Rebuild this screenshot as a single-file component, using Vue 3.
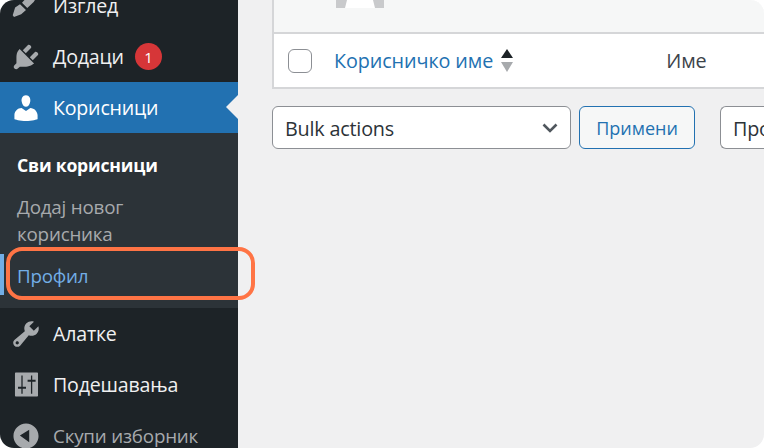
<script setup>
const before = [
  { label: 'Изглед', d: 'M6.25 8.900 10 12.500 7 15.200 2.500 16.800 1.700 15.800 3.200 10.900zM7.500 7.900 10.800 11.250 14.800 7.500 17 4 11.900 3.200z' },
  { label: 'Додаци', badge: '1', d: 'M13.11 4.36L9.87 7.6 8 5.73l3.24-3.24c.35-.34 1.05-.2 1.56.32.52.51.66 1.21.31 1.55zm-8 1.77l.91-1.12 9.01 9.01-1.19.84c-.71.71-2.63 1.16-3.82 1.16H6.14L4.9 17.26c-.59.59-1.54.59-2.12 0-.59-.58-.59-1.53 0-2.12l1.24-1.24v-3.88c0-1.13.4-3.19 1.09-3.89zm7.26 3.97l3.24-3.24c.34-.35 1.04-.21 1.55.31.52.51.66 1.21.31 1.55l-3.24 3.25z' },
]
const userIcon = 'M10 9.25c-2.27 0-2.73-3.44-2.73-3.44C7 4.02 7.82 2 9.97 2c2.16 0 2.98 2.02 2.71 3.81 0 0-.41 3.44-2.68 3.44zm0 2.57L12.72 10c2.39 0 4.52 2.33 4.52 4.53v2.49s-3.65 1.13-7.24 1.13c-3.65 0-7.24-1.13-7.24-1.13v-2.49c0-2.25 1.94-4.48 4.47-4.48z'
const after = [
  { label: 'Алатке', d: 'M16.68 9.77c-1.34 1.34-3.3 1.67-4.95.99l-5.41 6.52c-.99.99-2.59.99-3.58 0s-.99-2.59 0-3.57l6.52-5.42c-.68-1.65-.35-3.61.99-4.95 1.28-1.28 3.12-1.62 4.72-1.06l-2.89 2.89 2.82 2.82 2.86-2.87c.53 1.58.18 3.39-1.08 4.65zM3.81 16.21c.4.39 1.04.39 1.43 0 .4-.4.4-1.04 0-1.43-.39-.4-1.03-.4-1.43 0-.39.39-.39 1.03 0 1.43z' },
  { label: 'Подешавања', d: 'M3.6 2.200h13.400c.3 0 .5.2.5.5v14c0 .3-.2.5-.5.5H3.600c-.3 0-.5-.2-.5-.5v-14c0-.3.2-.5.5-.5zM7.100 4h.8v7.100h2.100v1.200H7.900v3.200h-.8v-3.200H5v-1.200h2.100zM13.100 4h.8v2.700H16v1.200h-2.100v7.600h-.8V7.900H11V6.700h2.100z' },
  { label: 'Скупи изборник', muted: true, d: 'M10 2.16c4.33 0 7.84 3.51 7.84 7.84s-3.51 7.84-7.84 7.84S2.16 14.33 2.16 10 5.71 2.16 10 2.16zm2 11.72V6.12L6.18 9.69z' },
]
</script>

<template>
  <div class="page">
    <aside class="sidebar">
      <div v-for="item in before" :key="item.label" class="item">
        <svg class="icon" viewBox="0 0 20 20"><path :d="item.d" /></svg>
        <span>{{ item.label }}</span>
        <span v-if="item.badge" class="badge">{{ item.badge }}</span>
      </div>
      <div class="item active">
        <svg class="icon" viewBox="0 0 20 20"><path :d="userIcon" /></svg>
        <span>Корисници</span>
        <i class="notch"></i>
      </div>
      <ul class="submenu">
        <li class="sub current">Сви корисници</li>
        <li class="sub two">Додај новог корисника</li>
        <li class="sub profile">
          Профил
          <i class="focus-bar"></i>
          <i class="highlight"></i>
        </li>
      </ul>
      <div v-for="item in after" :key="item.label" class="item" :class="{ muted: item.muted }">
        <svg class="icon" viewBox="0 0 20 20"><path fill-rule="evenodd" :d="item.d" /></svg>
        <span>{{ item.label }}</span>
      </div>
    </aside>

    <main class="main">
      <div class="table">
        <div class="table-top">
          <svg class="avatar" viewBox="0 0 48 8">
            <path d="M0 0h48v8H0z" fill="#c9cacc" />
            <path d="M11 0h26l2 8H9z" fill="#fff" />
          </svg>
        </div>
        <div class="table-head">
          <span class="check"></span>
          <span class="col-user">Корисничко име</span>
          <span class="sort"><i class="up"></i><i class="down"></i></span>
          <span class="col-name">Име</span>
        </div>
      </div>
      <div class="actions">
        <div class="select bulk">
          <span class="select-text">Bulk actions</span>
          <svg class="chev" viewBox="0 0 16 10"><path d="M1.500 1.500 8 8l6.500-6.500" /></svg>
        </div>
        <button class="apply">Примени</button>
        <div class="select role"><span class="select-text">Про</span></div>
      </div>
    </main>
  </div>
</template>

<style>
html, body { margin: 0; background: #fff; }
</style>

<style scoped>
.page {
  width: 764px;
  height: 448px;
  display: flex;
  overflow: hidden;
  border-radius: 14px;
  background: #f0f0f1;
  font-family: "Open Sans", "Noto Sans", sans-serif;
  box-sizing: border-box;
}
.sidebar {
  width: 238px;
  flex: none;
  margin-top: -20px;
  background: #1d2327;
  color: #f0f0f1;
}
.item {
  height: 51px;
  display: flex;
  align-items: center;
  font-size: 19.600px;
  letter-spacing: -0.2px;
  position: relative;
}
.icon {
  width: 32px;
  height: 32px;
  margin: 0 11px 0 10px;
  fill: #a7aaad;
  flex: none;
}
.badge {
  width: 27px;
  height: 27px;
  margin-left: 11px;
  border-radius: 50%;
  background: #d63638;
  color: #fff;
  font-size: 15px;
  display: flex;
  align-items: center;
  justify-content: center;
}
.active {
  background: #2271b1;
  color: #fff;
}
.active .icon { fill: #fff; }
.notch {
  position: absolute;
  right: 0;
  top: 13px;
  border: 12px solid transparent;
  border-right-color: #f0f0f1;
  border-left-width: 0;
}
.muted { color: #a7aaad; font-size: 18.800px; }
.submenu {
  margin: 0;
  padding: 19px 0 0;
  height: 175px;
  box-sizing: border-box;
  list-style: none;
  background: #2c3338;
  color: #a7aaad;
  font-size: 18.800px;
}
.sub {
  padding-left: 17px;
  line-height: 27px;
  margin-bottom: 15px;
  letter-spacing: -0.2px;
  position: relative;
}
.current { color: #fff; font-weight: 700; font-size: 17.600px; }
.two { width: 160px; }
.profile { color: #72aee6; }
.focus-bar {
  position: absolute;
  left: 0;
  top: -9px;
  width: 4px;
  height: 41px;
  background: #72aee6;
}
.highlight {
  position: absolute;
  left: 6px;
  top: -16px;
  width: 248.500px;
  height: 53px;
  box-sizing: border-box;
  border: 4.500px solid #ff7445;
  border-radius: 16px;
}
.main {
  flex: 1;
  min-width: 0;
  padding-left: 34px;
  overflow: hidden;
  color: #3c434a;
}
.table {
  width: 600px;
  border: 2px solid #d5d6d8;
  border-top: 0;
  border-right: 0;
  box-sizing: border-box;
  background: #fff;
}
.table-top {
  height: 34px;
  background: #f6f7f7;
  border-bottom: 2px solid #d5d6d8;
  padding-left: 62px;
  box-sizing: border-box;
  width: 100%;
}
.avatar {
  width: 48px;
  height: 8px;
  display: block;
}
.table-head {
  height: 53px;
  display: flex;
  align-items: center;
  font-size: 19.800px;
  white-space: nowrap;
  letter-spacing: -0.1px;
}
.check {
  width: 24px;
  height: 24px;
  margin-left: 14px;
  border: 1.500px solid #8c8f94;
  border-radius: 6px;
  box-sizing: border-box;
  background: #fff;
}
.col-user {
  margin-left: 22px;
  color: #2271b1;
}
.sort {
  display: flex;
  flex-direction: column;
  gap: 4px;
  margin-left: 8px;
}
.sort i {
  border: 6.500px solid transparent;
  border-top: 0;
  border-bottom: 9px solid #1d2327;
  width: 0;
  height: 0;
}
.sort .down {
  border-bottom: 0;
  border-top: 10px solid #a7aaad;
}
.col-name {
  margin-left: 153px;
}
.actions {
  display: flex;
  align-items: center;
  margin-top: 17px;
  height: 43px;
  white-space: nowrap;
}
.select {
  height: 43px;
  box-sizing: border-box;
  border: 1.500px solid #8c8f94;
  border-radius: 6px;
  background: #fff;
  display: flex;
  align-items: center;
  padding-left: 12px;
  font-size: 19.800px;
  letter-spacing: -0.2px;
  color: #2c3338;
}
.select-text { padding-top: 1px; }
.bulk {
  width: 299px;
  flex: none;
  justify-content: space-between;
  padding-right: 12px;
}
.chev {
  width: 16px;
  height: 10px;
  fill: none;
  stroke: #50575e;
  stroke-width: 2.600;
}
.apply {
  width: 116px;
  height: 43px;
  flex: none;
  margin-left: 8px;
  border: 1.500px solid #2271b1;
  border-radius: 6px;
  background: #f6f7f7;
  color: #2271b1;
  font: inherit;
  font-size: 18px;
  padding: 0;
}
.role {
  width: 44px;
  flex: none;
  margin-left: 25px;
  border-right: 0;
  border-radius: 6px 0 0 6px;
  overflow: hidden;
}
</style>
